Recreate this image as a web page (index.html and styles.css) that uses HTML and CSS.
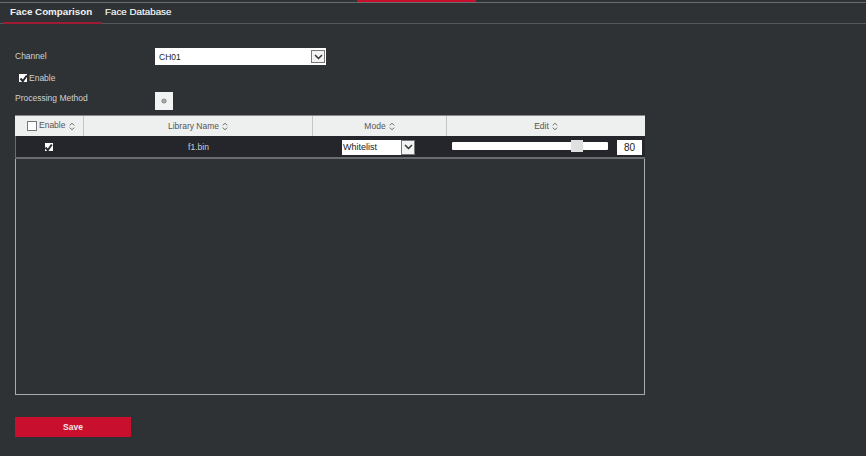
FILE: index.html
```html
<!DOCTYPE html>
<html lang="en">
<head>
<meta charset="utf-8">
<title>Face Comparison</title>
<link rel="stylesheet" href="styles.css">
</head>
<body>
<div class="page">
  <div class="topbar"><div class="topbar-red"></div></div>
  <nav class="tabs">
    <a class="tab active">Face Comparison</a>
    <a class="tab">Face Database</a>
  </nav>
  <main class="content">
    <div class="row row-channel">
      <label class="label">Channel</label>
      <div class="select select-channel">
        <span class="select-text">CH01</span>
        <span class="select-btn"><svg width="9" height="6" viewBox="0 0 9 6"><path d="M1 1 4.5 4.5 8 1" fill="none" stroke="#333" stroke-width="1.5"/></svg></span>
      </div>
    </div>
    <div class="row row-enable">
      <span class="check checked small"><svg width="9" height="9" viewBox="0 0 9 9"><path d="M1.5 4.5 3.8 7.2 7.8 1.5" fill="none" stroke="#26282e" stroke-width="2"/></svg></span>
      <span class="text">Enable</span>
    </div>
    <div class="row row-method">
      <label class="label">Processing Method</label>
      <button class="gear-btn"><svg width="8" height="8" viewBox="0 0 8 8"><circle cx="4" cy="4" r="2" fill="#a9acac" stroke="#8a8d8d" stroke-width="1.2"/></svg></button>
    </div>
    <section class="table">
      <div class="thead">
        <div class="th col-enable">
          <span class="check outline"></span><span class="th-enable-text">Enable</span>
          <svg class="sort" width="6" height="9" viewBox="0 0 6 9"><path d="M.8 3.4 3 1.2 5.2 3.4M.8 5.6 3 7.8 5.2 5.6" fill="none" stroke="#666" stroke-width="1"/></svg>
        </div>
        <div class="th col-name">Library Name
          <svg class="sort" width="6" height="9" viewBox="0 0 6 9"><path d="M.8 3.4 3 1.2 5.2 3.4M.8 5.6 3 7.8 5.2 5.6" fill="none" stroke="#666" stroke-width="1"/></svg>
        </div>
        <div class="th col-mode">Mode
          <svg class="sort" width="6" height="9" viewBox="0 0 6 9"><path d="M.8 3.4 3 1.2 5.2 3.4M.8 5.6 3 7.8 5.2 5.6" fill="none" stroke="#666" stroke-width="1"/></svg>
        </div>
        <div class="th col-edit">Edit
          <svg class="sort" width="6" height="9" viewBox="0 0 6 9"><path d="M.8 3.4 3 1.2 5.2 3.4M.8 5.6 3 7.8 5.2 5.6" fill="none" stroke="#666" stroke-width="1"/></svg>
        </div>
      </div>
      <div class="trow">
        <div class="td col-enable"><span class="check checked"><svg width="9" height="9" viewBox="0 0 9 9"><path d="M1.5 4.5 3.8 7.2 7.8 1.5" fill="none" stroke="#26282e" stroke-width="2"/></svg></span></div>
        <div class="td col-name">f1.bin</div>
        <div class="td col-mode">
          <div class="select select-mode">
            <span class="select-text">Whitelist</span>
            <span class="select-btn"><svg width="9" height="6" viewBox="0 0 9 6"><path d="M1 1 4.5 4.5 8 1" fill="none" stroke="#333" stroke-width="1.5"/></svg></span>
          </div>
        </div>
        <div class="td col-edit">
          <div class="slider"><span class="slider-thumb"></span></div>
          <span class="value">80</span>
        </div>
      </div>
      <div class="tbody-empty"></div>
    </section>
    <button class="save">Save</button>
  </main>
</div>
</body>
</html>
```
FILE: styles.css
```css
* { box-sizing: border-box; }
html, body { margin: 0; padding: 0; }
body { background: #2e3235; }
.page {
  width: 866px;
  height: 456px;
  overflow: hidden;
  background: #2e3235;
  color: #cfd1d1;
  font-family: "Liberation Sans", Arial, sans-serif;
  font-size: 8.5px;
}
.topbar { height: 3px; border-bottom: 1px solid #6a6d6f; }
.topbar-red { width: 119px; height: 2px; margin-left: 357px; background: #c8102e; }
.tabs {
  display: flex;
  height: 21px;
  padding-left: 3px;
  border-bottom: 1px solid #55585a;
  font-size: 9.8px;
}
.tab { height: 21px; padding: 3px 10px 0 3px; color: #e2e4e4; text-shadow: 0 0 .4px #e2e4e4; }
.tab.active {
  width: 99px;
  padding-left: 7px;
  color: #f2f2f2;
  font-weight: bold;
  text-shadow: none;
  border-bottom: 2px solid #a01a34;
  white-space: nowrap;
}
.content { padding: 24px 0 0 15px; }
.row { display: flex; align-items: center; }
.label { display: block; width: 140px; }
.row-channel { height: 17px; }
.row-channel .label { margin-top: -1px; }
.row-enable { height: 12px; margin-top: 7px; padding-left: 4px; gap: 2px; }
.row-enable .text { margin-top: -1px; }
.row-method { height: 18px; margin-top: 8px; align-items: flex-start; }
.row-method .label { padding-top: 1px; }
.select { display: flex; align-items: center; background: #fff; color: #222; }
.select-channel { width: 171px; height: 17px; padding: 0 1px 0 4px; }
.select-text { flex: 1; }
.select-btn {
  width: 14px;
  height: 13px;
  display: flex;
  align-items: center;
  justify-content: center;
  background: #f2f3f3;
  border: 1px solid #777;
}
.check {
  width: 8px;
  height: 8px;
  display: inline-flex;
  align-items: center;
  justify-content: center;
  background: #fff;
  flex: none;
}
.check svg { flex: none; }
.check.outline { width: 10px; height: 10px; border: 1px solid #777; }
.gear-btn {
  width: 18px;
  height: 18px;
  padding: 0;
  border: 0;
  background: #f2f3f3;
  display: flex;
  align-items: center;
  justify-content: center;
}
.table { width: 630px; margin-top: 5px; }
.thead { display: flex; height: 21px; background: #eeefef; color: #555; border-top: 1px solid #888; }
.th { display: flex; align-items: center; justify-content: center; gap: 3px; border-right: 1px solid #c4c5c5; }
.th:last-child { border-right: 0; }
.col-enable { width: 69px; flex: none; }
.col-name { width: 229px; flex: none; }
.col-mode { width: 134px; flex: none; }
.col-edit { flex: 1; }
.th.col-enable { gap: 1px; justify-content: flex-start; padding-left: 12px; }
.th-enable-text { margin: -3px 0 0 1px; }
.th.col-enable .sort { margin-left: 3px; }
.trow {
  display: flex;
  height: 23px;
  padding-top: 1px;
  background: #24262b;
  border-bottom: 2px solid #6a6d6f;
  border-left: 1px solid #6a6d6f;
}
.td { display: flex; align-items: center; justify-content: center; }
.td.col-enable { width: 68px; padding-right: 3px; }
.select-mode { width: 73px; height: 15px; padding: 0 0 0 1px; margin-left: -3px; font-size: 9px; }
.select-mode .select-btn { width: 14px; height: 15px; }
.td.col-edit { justify-content: flex-start; padding-left: 5px; gap: 9px; }
.slider {
  position: relative;
  width: 156px;
  height: 8px;
  margin-top: -3px;
  background: #fff;
  border-radius: 1px;
}
.slider-thumb {
  position: absolute;
  left: 119px;
  top: -2px;
  width: 12px;
  height: 12px;
  background: #dfe1e1;
}
.value {
  width: 25px;
  height: 15px;
  background: #fff;
  color: #222;
  font-size: 10px;
  display: flex;
  align-items: center;
  justify-content: center;
}
.tbody-empty {
  height: 236px;
  border: 1px solid #a8aaab;
  border-top: 0;
}
.save {
  display: block;
  width: 116px;
  height: 20px;
  margin-top: 22px;
  padding: 0;
  border: 0;
  background: #c8102e;
  color: #f4e6e8;
  font-family: inherit;
  font-size: 8.5px;
  font-weight: bold;
}
```
